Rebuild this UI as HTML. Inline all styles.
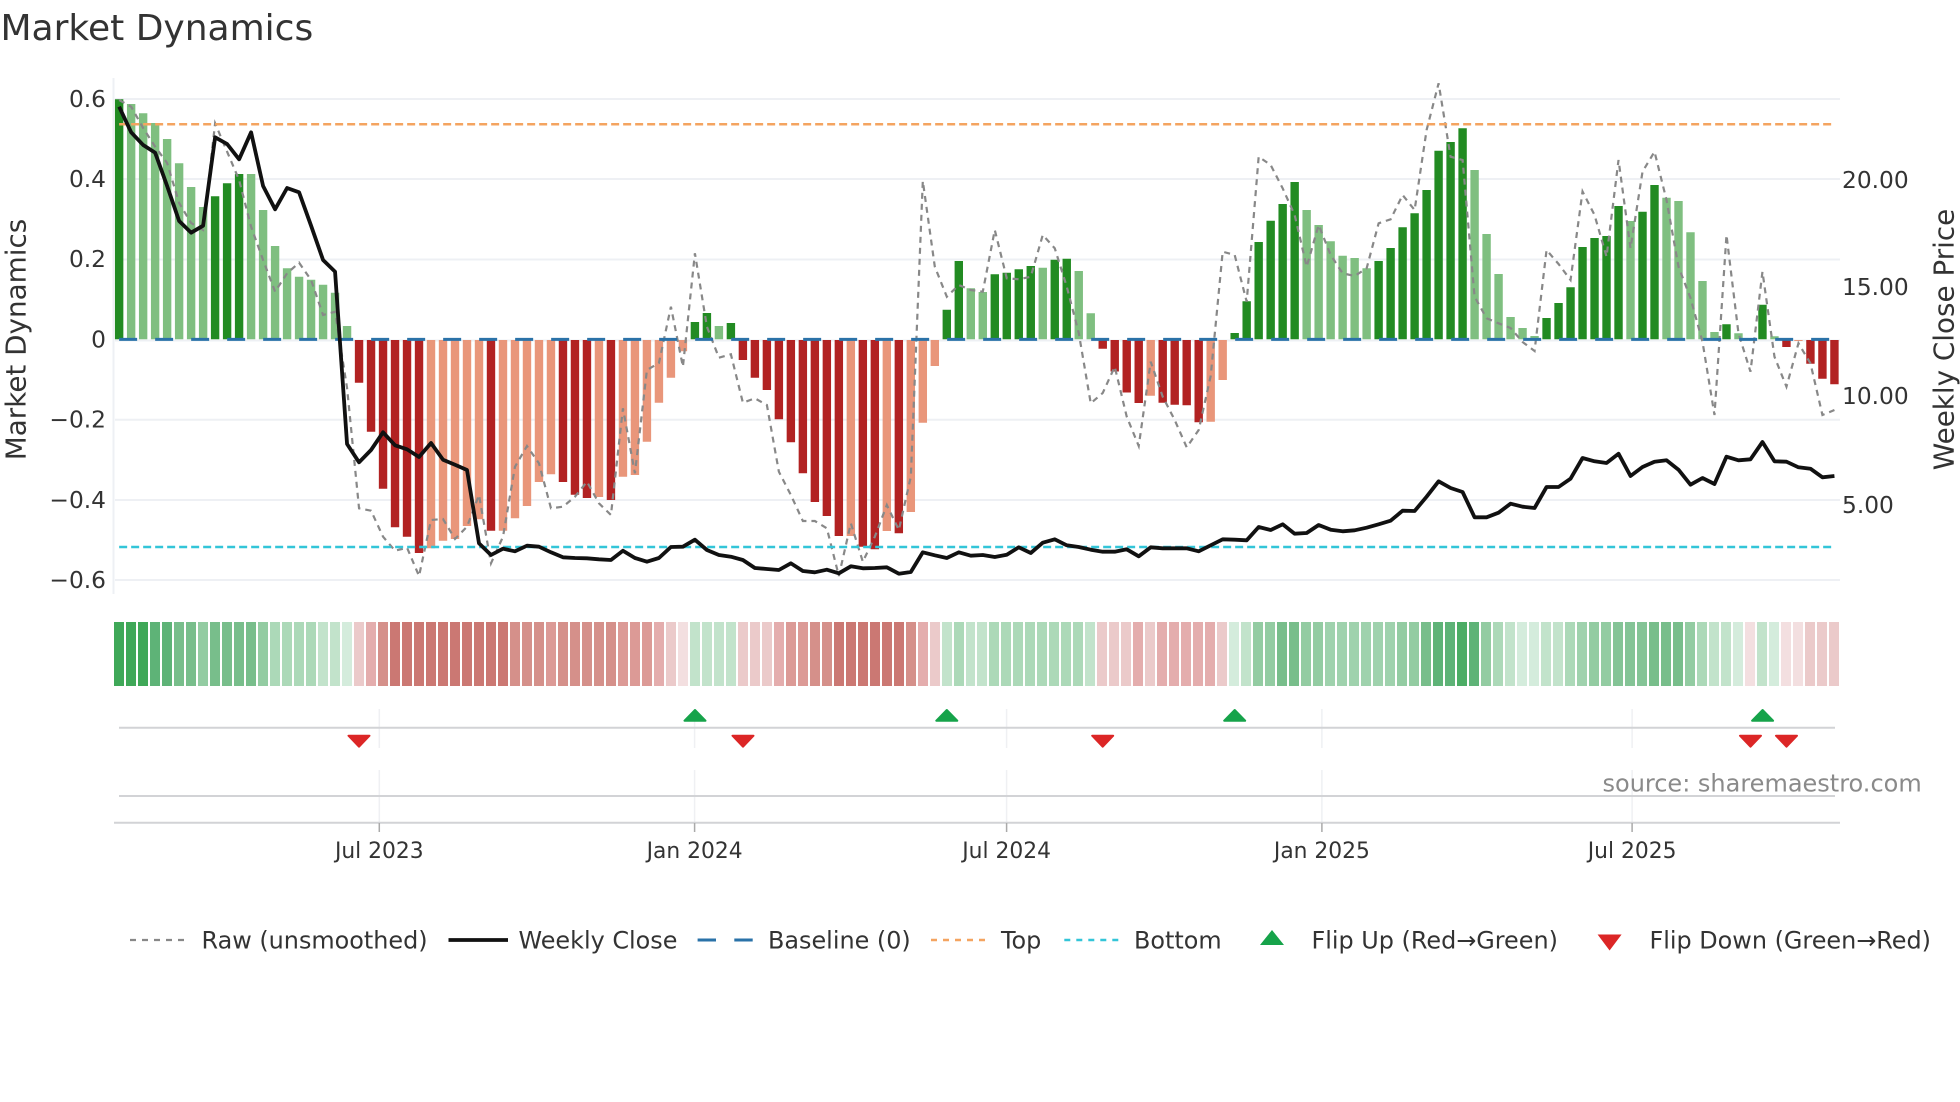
<!DOCTYPE html>
<html><head><meta charset="utf-8"><title>Market Dynamics</title>
<style>
html,body{margin:0;padding:0;background:#fff}
body{width:1960px;height:1102px;position:relative;overflow:hidden}
svg{position:absolute;left:0;top:0}
text{font-family:"DejaVu Sans","Liberation Sans",sans-serif;fill:#333}
.v{vector-effect:non-scaling-stroke;fill:none}
.t{font-size:23.3px}
.x{font-size:21.8px;text-anchor:middle}
.l{font-size:23.9px}
.a{font-size:27.8px;text-anchor:middle}
#h{position:absolute;left:114px;top:622px;width:1725px;height:64px;display:grid;grid-template-columns:repeat(144,1fr);column-gap:2px}
#h i{display:block;height:64px}
.g0{background:#d4ecdc}.g1{background:#c2e3cb}.g2{background:#acd9b8}.g3{background:#93cca2}.g4{background:#78be8b}.g5{background:#5eb377}.g6{background:#3fa858}
.gh{background:#9fd2ad}.gj{background:#84c496}.gk{background:#4cad65}
.r0{background:#f3dfe0}.r1{background:#ebcaca}.r2{background:#e4adad}.r3{background:#dc9a96}.r4{background:#d5908a}.r5{background:#cb7873}.r6{background:#c76a60}
</style></head>
<body>
<svg width="1960" height="1102" viewBox="0 0 1960 1102">
<text x="0.5" y="40" style="font-size:36px">Market Dynamics</text>

<!-- grid -->
<g stroke="#eef0f4" stroke-width="2" fill="none">
<path d="M115 99H1840M115 179H1840M115 259.5H1840M115 340.5H1840M115 419.7H1840M115 500H1840M115 580H1840"/>
<path d="M113.5 78V594"/>
</g>

<!-- bars and lines -->
<g transform="translate(119.15 0) scale(11.995 1)">
<path class="v" stroke="#228b22" stroke-width="8.4" d="M0 339.3V99.3M8 339.3V196.3M9 339.3V183.3M10 339.3V174M48 339.3V322M49 339.3V313M51 339.3V323M69 339.3V309.7M70 339.3V261M73 339.3V274.3M74 339.3V272.7M75 339.3V269.3M76 339.3V266M78 339.3V259.7M79 339.3V258.7M93 339.3V333M94 339.3V301.3M95 339.3V242M96 339.3V220.7M97 339.3V204M98 339.3V182M105 339.3V261M106 339.3V248M107 339.3V227.3M108 339.3V213.3M109 339.3V190M110 339.3V150.7M111 339.3V142M112 339.3V128.3M119 339.3V318M120 339.3V303M121 339.3V287.3M122 339.3V247M123 339.3V238M124 339.3V236M125 339.3V206M127 339.3V211.7M128 339.3V185M134 339.3V324.3M137 339.3V304.7"/>
<path class="v" stroke="#7fbf80" stroke-width="8.4" d="M1 339.3V104M2 339.3V113.3M3 339.3V123M4 339.3V139M5 339.3V163.3M6 339.3V187M7 339.3V207M11 339.3V174M12 339.3V210M13 339.3V246M14 339.3V268.3M15 339.3V276.7M16 339.3V279.7M17 339.3V284.7M18 339.3V292.7M19 339.3V326M50 339.3V326M71 339.3V288.3M72 339.3V292M77 339.3V267.7M80 339.3V271M81 339.3V313.3M99 339.3V210M100 339.3V225M101 339.3V241.3M102 339.3V255.7M103 339.3V258M104 339.3V268.3M113 339.3V170M114 339.3V234M115 339.3V274M116 339.3V317M117 339.3V328M118 339.3V336M126 339.3V221M129 339.3V197.7M130 339.3V201M131 339.3V232.3M132 339.3V281M133 339.3V332M135 339.3V333.3M138 339.3V336.3"/>
<path class="v" stroke="#b22222" stroke-width="8.4" d="M20 340V382.7M21 340V431.7M22 340V488.7M23 340V527.3M24 340V536.7M25 340V553M31 340V530.7M37 340V482M38 340V494.7M39 340V498M41 340V500M52 340V360M53 340V377.7M54 340V390M55 340V419.3M56 340V442.3M57 340V473.3M58 340V502M59 340V516M60 340V536M62 340V546.7M63 340V549.3M65 340V533.3M82 340V348.7M83 340V371.5M84 340V392.5M85 340V403M87 340V402.7M88 340V404.7M89 340V405.3M90 340V422.3M139 340V347M141 340V363.7M142 340V378.7M143 340V384.3"/>
<path class="v" stroke="#e9967a" stroke-width="8.4" d="M26 340V548.3M27 340V540.7M28 340V539M29 340V526M30 340V519.3M32 340V530.7M33 340V518.3M34 340V506M35 340V482M36 340V474.3M40 340V497M42 340V476.7M43 340V475M44 340V441.7M45 340V402.7M46 340V377.7M47 340V351.3M61 340V536M64 340V531M66 340V512M67 340V422.7M68 340V366M86 340V395.7M91 340V421.7M92 340V380M140 340V341"/>

<polyline class="v" stroke="#888" stroke-width="2.2" stroke-dasharray="6 5" points="0,100 1,106.7 2,128 3,146.7 4,163 5,203 6,223 7,230 8,123.3 9,151.7 10,180 11,226.7 12,260 13,291.7 14,273.3 15,262.7 16,280 17,315 18,311.7 19,388 20,508.3 21,510.7 22,536.7 23,550.7 24,547.7 25,576 26,520 27,519 28,539 29,526.7 30,495 31,563.3 32,536.7 33,466.7 34,446 35,463.3 36,508.3 37,506.7 38,496.7 39,481.7 40,503.3 41,515 42,408.3 43,473.3 44,370 45,363 46,306.7 47,366.7 48,253.3 49,326.7 50,357.7 51,354.3 52,402.7 53,398.3 54,405 55,471.7 56,495 57,521 58,521 59,528.3 60,576 61,523.3 62,561.7 63,536.7 64,505 65,530 66,476.7 67,181 68,266.7 69,296.7 70,285 71,290 72,291.7 73,230 74,278.3 75,279.3 76,276.7 77,235 78,248.3 79,286.7 80,333 81,403.3 82,393 83,366.7 84,416.7 85,446 86,361.7 87,396.7 88,420 89,447.3 90,430 91,376 92,251.7 93,255 94,301.7 95,156.7 96,165 97,188.3 98,215 99,266.7 100,225 101,255 102,273.3 103,276 104,268.3 105,223.3 106,219.3 107,195 108,210 109,130 110,83.3 111,156.7 112,160 113,296.7 114,318.3 115,323.3 116,328 117,342 118,351 119,250 120,264 121,280 122,191.5 123,215 124,256.7 125,160 126,248.3 127,171.7 128,151.7 129,200 130,266.7 131,298 132,341.7 133,415 134,235 135,333.3 136,371.7 137,271.7 138,356.7 139,386.7 140,343.3 141,363.3 142,415 143,410"/>

<path class="v" stroke="#2a72a8" stroke-width="3" stroke-dasharray="18 18" d="M0 339.4H143"/>
<path class="v" stroke="#f4a460" stroke-width="2.5" stroke-dasharray="8 4" d="M0 124.3H143"/>
<path class="v" stroke="#33c5d8" stroke-width="2.5" stroke-dasharray="8 4" d="M0 547H143"/>

<polyline class="v" stroke="#111" stroke-width="3.8" stroke-linejoin="round" points="0,106.7 1,132.3 2,145 3,152.7 4,186 5,221 6,232.7 7,225.7 8,137.3 9,144 10,159.3 11,132.3 12,186 13,209.3 14,188 15,192.3 16,225.7 17,260 18,271.7 19,444 20,462.3 21,450 22,432.3 23,445.3 24,449.3 25,457 26,443 27,459.7 28,464.7 29,470 30,543.3 31,555 32,548.7 33,551.3 34,545.7 35,546.7 36,552.3 37,557.3 38,558 39,558.3 40,559.3 41,560 42,550.7 43,558 44,561.7 45,558 46,547 47,546.7 48,539.7 49,550 50,555 51,556.7 52,560 53,568 54,569 55,570 56,563.3 57,571 58,572.3 59,569.7 60,573.3 61,566.3 62,568.3 63,568 64,567.3 65,573.7 66,572 67,552.3 68,555.3 69,558 70,552.3 71,555.7 72,555 73,557 74,554.7 75,547.3 76,553 77,542.7 78,539.3 79,545.3 80,547 81,549.7 82,551.7 83,551.7 84,549.3 85,556.3 86,547.3 87,548.3 88,548.3 89,548.3 90,551.3 91,545.3 92,539.3 93,539.7 94,540.3 95,527 96,530 97,524.3 98,533.7 99,533 100,525 101,529.7 102,531.3 103,530.3 104,527.7 105,524.3 106,520.7 107,510.7 108,511 109,496.7 110,481.3 111,488 112,492 113,517.3 114,517.3 115,512.7 116,503.7 117,506.7 118,508 119,487 120,487 121,478.7 122,458 123,461.3 124,463 125,453.7 126,476 127,467 128,461.7 129,460.3 130,469.7 131,484.7 132,478 133,484 134,456.7 135,460.3 136,459.3 137,442 138,461.3 139,461.7 140,467.3 141,468.7 142,477.3 143,476"/>
</g>

<!-- left ticks -->
<text class="t" text-anchor="end" x="106" y="106.8">0.6</text>
<text class="t" text-anchor="end" x="106" y="186.8">0.4</text>
<text class="t" text-anchor="end" x="106" y="267">0.2</text>
<text class="t" text-anchor="end" x="106" y="347.6">0</text>
<text class="t" text-anchor="end" x="106" y="427.6">−0.2</text>
<text class="t" text-anchor="end" x="106" y="508">−0.4</text>
<text class="t" text-anchor="end" x="106" y="588">−0.6</text>
<!-- right ticks -->
<text class="t" x="1842" y="188">20.00</text>
<text class="t" x="1842" y="295">15.00</text>
<text class="t" x="1842" y="404.2">10.00</text>
<text class="t" x="1842" y="513.2">5.00</text>

<text class="a" transform="translate(25.5 339.5) rotate(-90)">Market Dynamics</text>
<text class="a" transform="translate(1953.5 339.5) rotate(-90)">Weekly Close Price</text>

<!-- lower rows -->
<g stroke="#eff0f3" stroke-width="1.5" fill="none">
<path d="M379.3 709V748M694.6 709V748M1006.6 709V748M1321.9 709V748M1632.1 709V748"/>
<path d="M379.3 770V823M694.6 770V823M1006.6 770V823M1321.9 770V823M1632.1 770V823"/>
</g>
<g stroke="#d2d3d6" stroke-width="2" fill="none">
<path d="M119 727.7H1835M119 796H1835M114 822.7H1840"/>
</g>
<path d="M379.3 823V832M694.6 823V832M1006.6 823V832M1321.9 823V832M1632.1 823V832" stroke="#aaa" stroke-width="1.5" fill="none"/>

<!-- flip markers -->
<g fill="#16a34a" stroke="#16a34a" stroke-width="2" stroke-linejoin="round">
<path d="M695 710L684.5 720.7H705.5ZM946.8 710L936.3 720.7H957.3ZM1234.7 710L1224.2 720.7H1245.2ZM1762.6 710L1752.1 720.7H1773.1Z"/>
</g>
<g fill="#dc2626" stroke="#dc2626" stroke-width="2" stroke-linejoin="round">
<path d="M359 746.7L348.5 735.7H369.5ZM743 746.7L732.5 735.7H753.5ZM1102.7 746.7L1092.2 735.7H1113.2ZM1750.5 746.7L1740 735.7H1761ZM1786.5 746.7L1776 735.7H1797Z"/>
</g>

<text class="x" x="379.3" y="858">Jul 2023</text>
<text class="x" x="694.6" y="858">Jan 2024</text>
<text class="x" x="1006.6" y="858">Jul 2024</text>
<text class="x" x="1321.9" y="858">Jan 2025</text>
<text class="x" x="1632.1" y="858">Jul 2025</text>

<text x="1602.5" y="791.7" style="font-size:24px;fill:#8a8a8a">source: sharemaestro.com</text>

<!-- legend -->
<path d="M130 940H185" stroke="#888" stroke-width="2.2" stroke-dasharray="6 6" fill="none"/>
<text class="l" x="201.5" y="948.5">Raw (unsmoothed)</text>
<path d="M448.5 940H508" stroke="#111" stroke-width="3.8" fill="none"/>
<text class="l" x="518.5" y="948.5">Weekly Close</text>
<path d="M697.6 940H716M734.3 940H752.7" stroke="#2a72a8" stroke-width="3" fill="none"/>
<text class="l" x="768" y="948.5">Baseline (0)</text>
<path d="M931 940H986" stroke="#f4a460" stroke-width="2.5" stroke-dasharray="6 6" fill="none"/>
<text class="l" x="1001" y="948.5">Top</text>
<path d="M1064.3 940H1119" stroke="#33c5d8" stroke-width="2.5" stroke-dasharray="6 6" fill="none"/>
<text class="l" x="1134" y="948.5">Bottom</text>
<path d="M1272 930L1260 945H1284Z" fill="#16a34a"/>
<text class="l" x="1311.5" y="948.5">Flip Up (Red→Green)</text>
<path d="M1609.6 950.5L1597.6 934.5H1621.6Z" fill="#dc2626"/>
<text class="l" x="1649.5" y="948.5">Flip Down (Green→Red)</text>
</svg>

<div id="h"><i class="g6"></i><i class="g6"></i><i class="g6"></i><i class="g5"></i><i class="g5"></i><i class="g4"></i><i class="g4"></i><i class="g3"></i><i class="g4"></i><i class="g4"></i><i class="g4"></i><i class="g4"></i><i class="g3"></i><i class="g2"></i><i class="g2"></i><i class="g2"></i><i class="g2"></i><i class="g1"></i><i class="g1"></i><i class="g0"></i><i class="r1"></i><i class="r2"></i><i class="r4"></i><i class="r5"></i><i class="r5"></i><i class="r5"></i><i class="r5"></i><i class="r5"></i><i class="r5"></i><i class="r5"></i><i class="r5"></i><i class="r5"></i><i class="r5"></i><i class="r4"></i><i class="r4"></i><i class="r4"></i><i class="r3"></i><i class="r4"></i><i class="r4"></i><i class="r4"></i><i class="r4"></i><i class="r4"></i><i class="r3"></i><i class="r3"></i><i class="r3"></i><i class="r2"></i><i class="r1"></i><i class="r0"></i><i class="g1"></i><i class="g1"></i><i class="g1"></i><i class="g1"></i><i class="r1"></i><i class="r1"></i><i class="r1"></i><i class="r2"></i><i class="r3"></i><i class="r3"></i><i class="r4"></i><i class="r4"></i><i class="r5"></i><i class="r5"></i><i class="r5"></i><i class="r5"></i><i class="r5"></i><i class="r5"></i><i class="r4"></i><i class="r2"></i><i class="r1"></i><i class="g1"></i><i class="g2"></i><i class="g1"></i><i class="g1"></i><i class="g2"></i><i class="g2"></i><i class="g2"></i><i class="g2"></i><i class="g2"></i><i class="g2"></i><i class="g2"></i><i class="g2"></i><i class="g1"></i><i class="r1"></i><i class="r1"></i><i class="r1"></i><i class="r2"></i><i class="r1"></i><i class="r2"></i><i class="r2"></i><i class="r2"></i><i class="r2"></i><i class="r2"></i><i class="r1"></i><i class="g0"></i><i class="g1"></i><i class="g3"></i><i class="g3"></i><i class="g4"></i><i class="g4"></i><i class="g3"></i><i class="g3"></i><i class="gh"></i><i class="gh"></i><i class="gh"></i><i class="gh"></i><i class="gh"></i><i class="gh"></i><i class="g3"></i><i class="g3"></i><i class="g4"></i><i class="g5"></i><i class="g5"></i><i class="gk"></i><i class="g5"></i><i class="g3"></i><i class="g2"></i><i class="g1"></i><i class="g0"></i><i class="g0"></i><i class="g1"></i><i class="g1"></i><i class="g2"></i><i class="gh"></i><i class="g3"></i><i class="g3"></i><i class="gj"></i><i class="gj"></i><i class="gj"></i><i class="g4"></i><i class="g4"></i><i class="g4"></i><i class="g3"></i><i class="g2"></i><i class="g1"></i><i class="g1"></i><i class="g0"></i><i class="r0"></i><i class="g1"></i><i class="g0"></i><i class="r0"></i><i class="r0"></i><i class="r1"></i><i class="r1"></i><i class="r1"></i></div>
</body></html>
